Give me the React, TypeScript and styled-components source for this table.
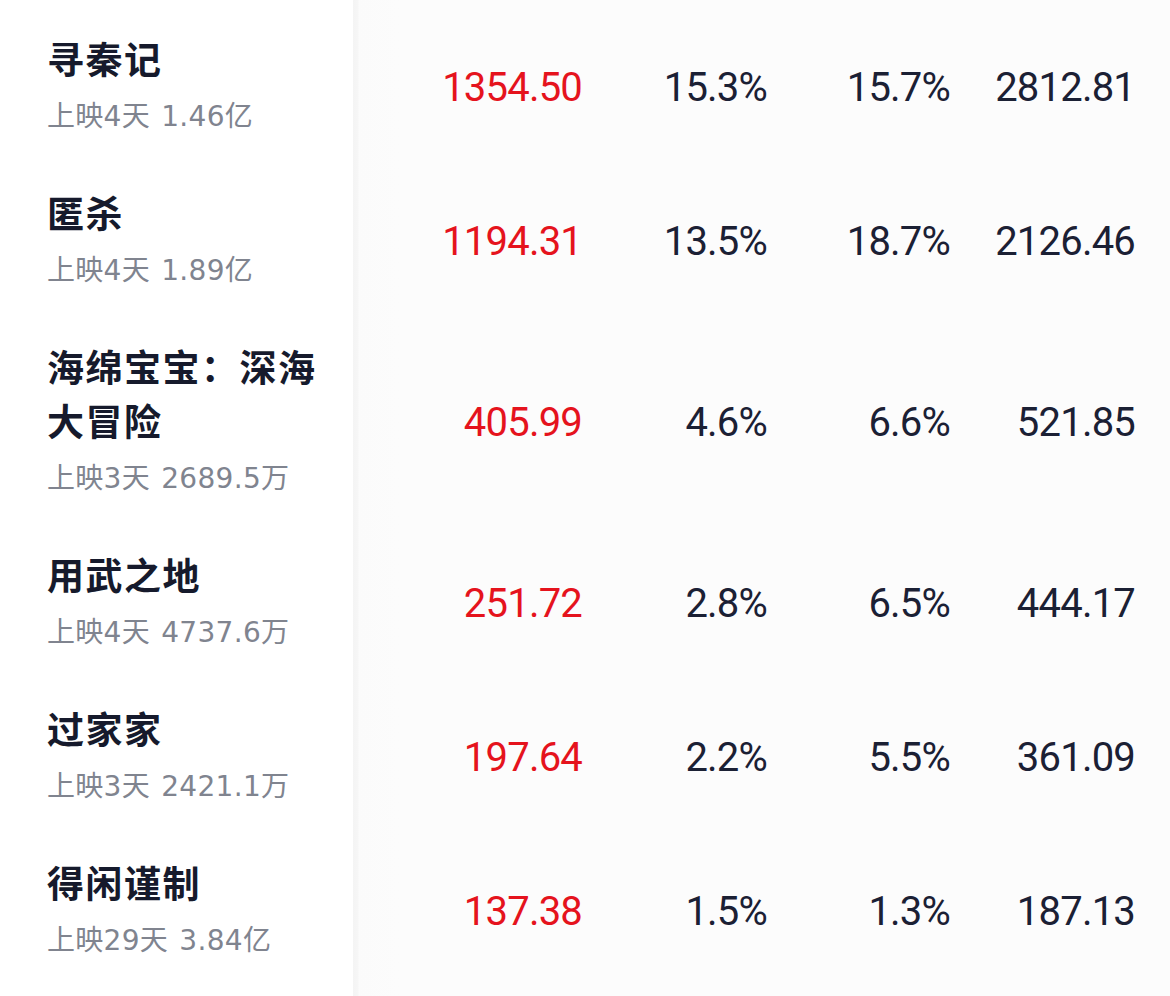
import styled, { createGlobalStyle } from "styled-components";

type Film = {
  title: string;
  days: number;
  total: string;
  gross: string;
  share: string;
  seats: string;
  forecast: string;
};

const films: Film[] = [
  { title: "寻秦记", days: 4, total: "1.46亿", gross: "1354.50", share: "15.3%", seats: "15.7%", forecast: "2812.81" },
  { title: "匿杀", days: 4, total: "1.89亿", gross: "1194.31", share: "13.5%", seats: "18.7%", forecast: "2126.46" },
  { title: "海绵宝宝：深海大冒险", days: 3, total: "2689.5万", gross: "405.99", share: "4.6%", seats: "6.6%", forecast: "521.85" },
  { title: "用武之地", days: 4, total: "4737.6万", gross: "251.72", share: "2.8%", seats: "6.5%", forecast: "444.17" },
  { title: "过家家", days: 3, total: "2421.1万", gross: "197.64", share: "2.2%", seats: "5.5%", forecast: "361.09" },
  { title: "得闲谨制", days: 29, total: "3.84亿", gross: "137.38", share: "1.5%", seats: "1.3%", forecast: "187.13" },
];

const GlobalStyle = createGlobalStyle`
  html, body {
    margin: 0;
    padding: 0;
    background: #fcfcfc;
  }
  body {
    font-family: "Noto Sans CJK SC", "Noto Sans", sans-serif;
    -webkit-font-smoothing: antialiased;
  }
`;

const Table = styled.div`
  display: flex;
  flex-direction: column;
  width: 1170px;
  height: 996px;
  overflow: hidden;
  background: linear-gradient(90deg, #ffffff 0, #ffffff 353px, #f4f4f4 353px, #f6f6f6 358px, #fbfbfb 359px, #fcfcfc 400px);
`;

const Spacer = styled.div`
  height: 11px;
  flex-shrink: 0;
`;

const Row = styled.div`
  display: grid;
  grid-template-columns: 353px 229px 185px 183px 185px 1fr;
  align-items: center;
  flex-shrink: 0;
`;

const NameCell = styled.div`
  display: flex;
  flex-direction: column;
  padding: 20px 20px 30px 47px;
`;

const Title = styled.div`
  font-size: 37px;
  line-height: 54px;
  font-weight: 700;
  color: #161a2c;
  letter-spacing: 1.5px;
  margin-bottom: 14px;
`;

const Sub = styled.div`
  font-family: "DejaVu Sans", "Noto Sans CJK SC", sans-serif;
  font-size: 28px;
  line-height: 36px;
  color: #80848f;
  white-space: nowrap;
  letter-spacing: 0.3px;
  word-spacing: 2px;
`;

const Num = styled.div<{ $red?: boolean }>`
  text-align: right;
  font-family: Roboto, "Liberation Sans", sans-serif;
  font-size: 40px;
  letter-spacing: -0.8px;
  line-height: 48px;
  color: ${(p) => (p.$red ? "#e5131d" : "#1b2034")};
`;

export default function App() {
  return (
    <>
      <GlobalStyle />
      <Table>
        <Spacer />
        {films.map((f) => (
          <Row key={f.title}>
            <NameCell>
              <Title>{f.title}</Title>
              <Sub>
                上映{f.days}天 {f.total}
              </Sub>
            </NameCell>
            <Num $red>{f.gross}</Num>
            <Num>{f.share}</Num>
            <Num>{f.seats}</Num>
            <Num>{f.forecast}</Num>
            <div />
          </Row>
        ))}
      </Table>
    </>
  );
}
